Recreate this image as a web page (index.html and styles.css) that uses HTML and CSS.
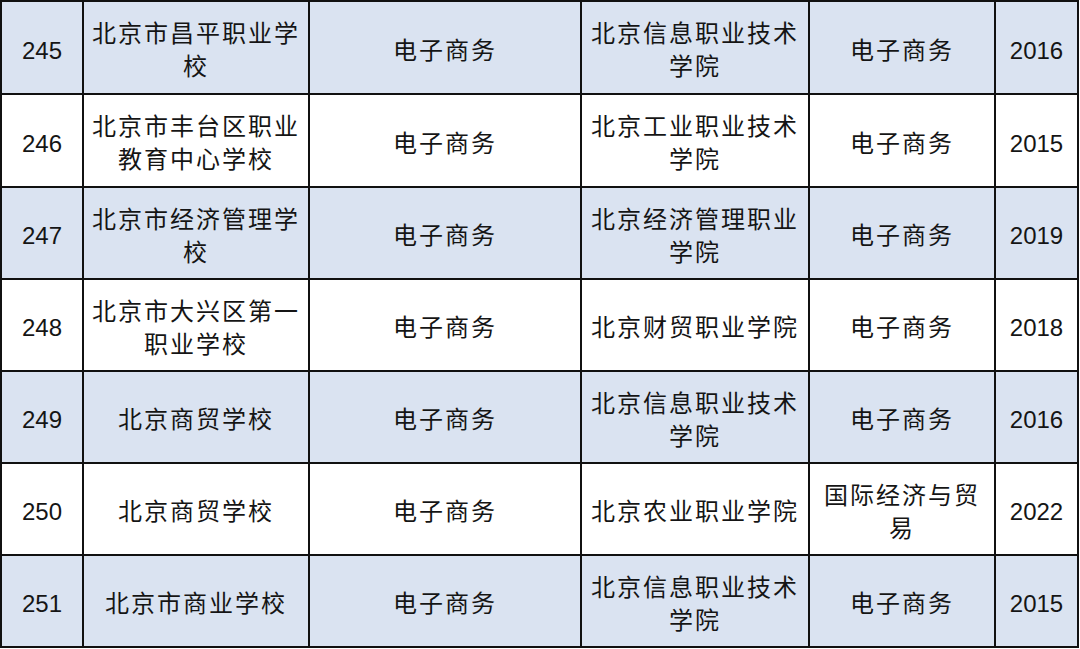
FILE: index.html
```html
<!DOCTYPE html>
<html lang="zh-CN">
<head>
<meta charset="utf-8">
<title>对口专业表</title>
<link rel="stylesheet" href="styles.css">
</head>
<body>
<div class="table">
  <div class="row alt tall">
    <div class="cell num">245</div>
    <div class="cell cjk">北京市昌平职业学校</div>
    <div class="cell cjk">电子商务</div>
    <div class="cell cjk">北京信息职业技术学院</div>
    <div class="cell cjk">电子商务</div>
    <div class="cell num">2016</div>
  </div>
  <div class="row tall">
    <div class="cell num">246</div>
    <div class="cell cjk">北京市丰台区职业教育中心学校</div>
    <div class="cell cjk">电子商务</div>
    <div class="cell cjk">北京工业职业技术学院</div>
    <div class="cell cjk">电子商务</div>
    <div class="cell num">2015</div>
  </div>
  <div class="row alt">
    <div class="cell num">247</div>
    <div class="cell cjk">北京市经济管理学校</div>
    <div class="cell cjk">电子商务</div>
    <div class="cell cjk">北京经济管理职业学院</div>
    <div class="cell cjk">电子商务</div>
    <div class="cell num">2019</div>
  </div>
  <div class="row">
    <div class="cell num">248</div>
    <div class="cell cjk">北京市大兴区第一职业学校</div>
    <div class="cell cjk">电子商务</div>
    <div class="cell cjk">北京财贸职业学院</div>
    <div class="cell cjk">电子商务</div>
    <div class="cell num">2018</div>
  </div>
  <div class="row alt">
    <div class="cell num">249</div>
    <div class="cell cjk">北京商贸学校</div>
    <div class="cell cjk">电子商务</div>
    <div class="cell cjk">北京信息职业技术学院</div>
    <div class="cell cjk">电子商务</div>
    <div class="cell num">2016</div>
  </div>
  <div class="row">
    <div class="cell num">250</div>
    <div class="cell cjk">北京商贸学校</div>
    <div class="cell cjk">电子商务</div>
    <div class="cell cjk">北京农业职业学院</div>
    <div class="cell cjk">国际经济与贸易</div>
    <div class="cell num">2022</div>
  </div>
  <div class="row alt">
    <div class="cell num">251</div>
    <div class="cell cjk">北京市商业学校</div>
    <div class="cell cjk">电子商务</div>
    <div class="cell cjk">北京信息职业技术学院</div>
    <div class="cell cjk">电子商务</div>
    <div class="cell num">2015</div>
  </div>
</div>
</body>
</html>
```

FILE: styles.css
```css
html, body {
  margin: 0;
  padding: 0;
  background: #ffffff;
}

body {
  width: 1080px;
  height: 649px;
  overflow: hidden;
  font-family: "Liberation Sans", "Noto Sans CJK SC", sans-serif;
  color: #151515;
}

.table {
  display: flex;
  flex-direction: column;
  width: 1079px;
  border-left: 2px solid #111111;
  border-top: 2px solid #111111;
  box-sizing: border-box;
}

.row {
  display: grid;
  grid-template-columns: 82px 226px 272px 228px 186px 83px;
  height: 92px;
  background: #ffffff;
}

.row.tall {
  height: 93px;
}

.row.alt {
  background: #dae3f1;
}

.cell {
  display: flex;
  align-items: center;
  justify-content: center;
  text-align: center;
  box-sizing: border-box;
  border-right: 2px solid #111111;
  border-bottom: 2px solid #111111;
  padding: 5px 4px 0;
  font-size: 24px;
  line-height: 33px;
}

.cjk {
  letter-spacing: 2px;
}

.num {
  letter-spacing: 0;
}
```
